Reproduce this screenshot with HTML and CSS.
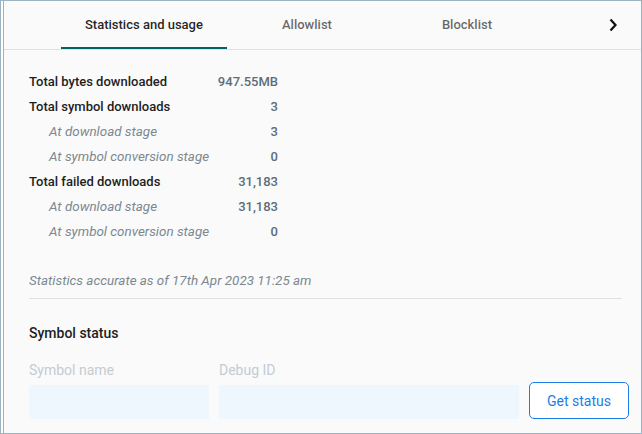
FILE: index.html
```html
<!DOCTYPE html>
<html lang="en">
<head>
  <meta charset="UTF-8" />
  <meta name="viewport" content="width=device-width, initial-scale=1" />
  <title>Symbol server - Statistics</title>
  <link rel="stylesheet" href="styles.css">
</head>
<body>
  <div class="frame">
    <div class="panel">
      <nav class="tabs">
        <div class="tab-spacer"></div>
        <a class="tab active">Statistics and usage</a>
        <a class="tab">Allowlist</a>
        <a class="tab">Blocklist</a>
        <div class="tab-fill"></div>
        <button class="tab-next" aria-label="Next">
          <svg width="10" height="14" viewBox="0 0 10 14"><path d="M2.5 1.5 L7.5 7 L2.5 12.5" fill="none" stroke="#111" stroke-width="2.2"/></svg>
        </button>
      </nav>

      <div class="content">
        <div class="stats">
          <div class="label">Total bytes downloaded</div><div class="value">947.55MB</div>
          <div class="label">Total symbol downloads</div><div class="value">3</div>
          <div class="label sub">At download stage</div><div class="value">3</div>
          <div class="label sub">At symbol conversion stage</div><div class="value">0</div>
          <div class="label">Total failed downloads</div><div class="value">31,183</div>
          <div class="label sub">At download stage</div><div class="value">31,183</div>
          <div class="label sub">At symbol conversion stage</div><div class="value">0</div>
        </div>

        <p class="accuracy">Statistics accurate as of 17th Apr 2023 11:25 am</p>
        <hr class="divider">

        <h2 class="section-title">Symbol status</h2>
        <form class="status-form">
          <label class="field name-field">
            <span>Symbol name</span>
            <input type="text">
          </label>
          <label class="field debug-field">
            <span>Debug ID</span>
            <input type="text">
          </label>
          <button type="button" class="get-status">Get status</button>
        </form>
      </div>
    </div>
  </div>
</body>
</html>
```

FILE: styles.css
```css
html, body {
  margin: 0;
  padding: 0;
  background: #fff;
  font-family: Roboto, "Liberation Sans", sans-serif;
}
.frame {
  width: 642px;
  height: 434px;
  box-sizing: border-box;
  border: 1px solid #9ab4c4;
  padding-left: 2px;
  background: #fff;
  overflow: hidden;
}
.panel {
  height: 100%;
  border-left: 1px solid #9ab4c4;
  background: #fafafa;
}
.tabs {
  display: flex;
  height: 48px;
  border-bottom: 1px solid #e0e0e0;
}
.tab-spacer {
  width: 57px;
}
.tab {
  min-width: 160px;
  box-sizing: border-box;
  padding: 0 24px;
  display: flex;
  align-items: center;
  justify-content: center;
  font-size: 13px;
  font-weight: 500;
  color: rgba(0, 0, 0, 0.6);
  border-bottom: 2px solid transparent;
}
.tab.active {
  color: rgba(0, 0, 0, 0.87);
  border-bottom-color: #006466;
}
.tab-fill {
  flex: 1;
}
.tab-next {
  width: 32px;
  margin-right: 12px;
  border: none;
  background: none;
  padding: 0;
  display: flex;
  align-items: center;
  justify-content: center;
}
.content {
  padding: 19px 19px 0 25px;
}
.stats {
  width: 249px;
  display: grid;
  grid-template-columns: 1fr auto;
  grid-auto-rows: 25px;
  align-items: center;
  font-size: 13px;
}
.label {
  font-weight: 500;
  color: #1e1e1e;
}
.label.sub {
  font-weight: 400;
  font-style: italic;
  font-size: 13.4px;
  color: #7b8891;
  padding-left: 20px;
}
.value {
  text-align: right;
  font-weight: 500;
  color: #5c6d79;
}
.accuracy {
  margin: 28px 0 0;
  font-size: 13.4px;
  font-style: italic;
  color: #7b8891;
  line-height: 18px;
}
.divider {
  margin: 8px 0 0;
  border: none;
  border-top: 1px solid #e0e0e0;
}
.section-title {
  margin: 25px 0 0;
  font-size: 14px;
  font-weight: 500;
  color: #1e1e1e;
  line-height: 18px;
}
.status-form {
  display: flex;
  align-items: flex-end;
  gap: 10px;
  margin-top: 19px;
  margin-right: -8px;
}
.field {
  display: flex;
  flex-direction: column;
  flex-shrink: 0;
  gap: 6px;
}
.field span {
  font-size: 14px;
  color: #c3ccd2;
  line-height: 18px;
}
.field input {
  height: 34px;
  box-sizing: border-box;
  border: none;
  background: #eef6fe;
  padding: 0 8px;
  margin: 0;
}
.name-field input { width: 180px; }
.debug-field input { width: 300px; }
.get-status {
  width: 100px;
  height: 37px;
  flex-shrink: 0;
  border: 1px solid #1a7ee8;
  border-radius: 5px;
  background: #fff;
  color: #1a7ee8;
  font-family: Roboto, "Liberation Sans", sans-serif;
  font-size: 14px;
}
```
